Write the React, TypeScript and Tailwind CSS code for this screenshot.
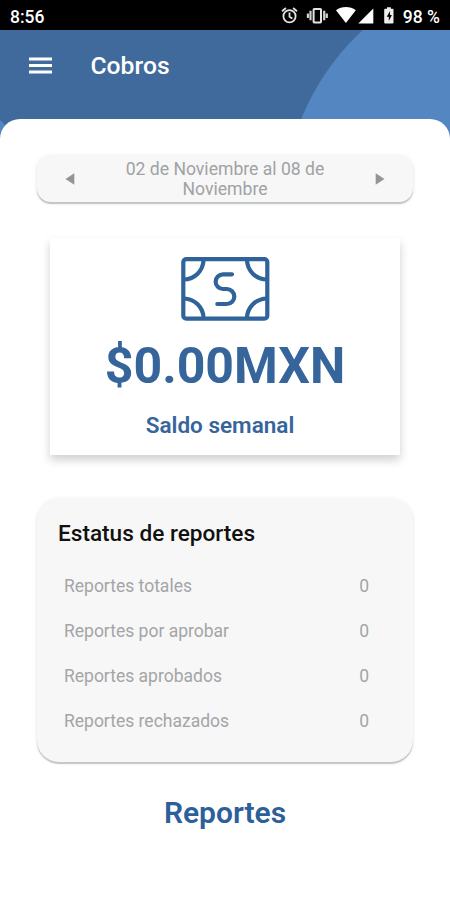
import React from "react";

type Report = {
  label: string;
  total: number;
};

const reports: Report[] = [
  { label: "Reportes totales", total: 0 },
  { label: "Reportes por aprobar", total: 0 },
  { label: "Reportes aprobados", total: 0 },
  { label: "Reportes rechazados", total: 0 },
];

function StatusBar() {
  return (
    <div className="h-[30px] bg-black text-white flex items-center justify-between px-[10px] pt-[3px]">
      <span className="text-[17.5px] leading-[18px] font-medium">8:56</span>
      <div className="flex items-center">
        <svg width="160" height="30" viewBox="280 0 160 30" className="-mt-[3px] -mr-[37px]">
          {/* alarm */}
          <g fill="none" stroke="#e4e4e4" strokeWidth="1.8">
            <circle cx="289.5" cy="16.2" r="6.1" />
            <path d="M289.5 12.5v4.2l2.9 1.8M282 11.2l3.9-3.2M297 11.2l-3.9-3.2" />
          </g>
          {/* vibrate */}
          <rect x="313.600" y="9" width="7.400" height="13.400" rx="0.6" fill="none" stroke="#e4e4e4" strokeWidth="2" />
          <path d="M310.500 10.800v9.400M324.200 10.800v9.400M307.900 13.400v4.600M326.800 13.400v4.600" stroke="#d0d0d0" strokeWidth="2.2" />
          {/* wifi, signal */}
          <path d="M336 10.2c5.6-4.2 14.2-4.2 19.8 0L345.900 23z" fill="#fff" />
          <path d="M373.3 8.4v15H358.3z" fill="#fff" />
          {/* battery */}
          <path d="M385.5 8.7h1.5V7.2h3.8v1.5h1.7q1 0 1 1v12.7q0 1-1 1h-7.300q-1 0-1-1V9.7q0-1 1-1z" fill="#eee" />
          <path d="M390.100 11l-3.400 5.700h2.100v4.200l3.100-5.800h-1.900z" fill="#000" />
        </svg>
        <span className="text-[17.5px] leading-[18px] font-medium whitespace-nowrap">98 %</span>
      </div>
    </div>
  );
}

function Arrow({ left = false }: { left?: boolean }) {
  return (
    <svg width="10" height="12" viewBox="0 0 10 12" fill="#929497" className={left ? "rotate-180" : ""}>
      <path d="M.7.2 9.5 6 .7 11.8z" />
    </svg>
  );
}

function MoneyIcon() {
  return (
    <svg width="90" height="66" viewBox="180 256 90 66" fill="none" stroke="#31639b" strokeWidth="4.2">
      <rect x="183.3" y="259.1" width="84" height="59.6" rx="3" />
      <path d="M203.5 260a20 20 0 0 1-19.5 19.5M247 260a20 20 0 0 0 19.5 19.5M203.5 318a20 20 0 0 0-19.5-19.5M247 318a20 20 0 0 1 19.5-19.5" />
      <path d="M232 274.3H223a7.35 7.35 0 0 0 0 14.7h3.8a7.5 7.5 0 0 1 0 15h-9.5" strokeLinecap="round" />
    </svg>
  );
}

export default function App() {
  return (
    <div className="w-[450px] h-[900px] overflow-hidden bg-white font-['Roboto',sans-serif] flex flex-col">
      <StatusBar />

      <header className="relative h-[109px] shrink-0 bg-[#406a9b]">
        <svg width="450" height="109" viewBox="0 30 450 109" className="absolute inset-0">
          <circle cx="527.6" cy="210" r="244" fill="#5487c1" />
          <circle cx="-38" cy="164" r="58" fill="#5487c1" />
        </svg>
        <div className="relative flex items-center h-[71px] pl-[29px] text-white">
          <svg width="23" height="17" viewBox="0 0 23 17" fill="#fff">
            <path d="M0 .5h23v3H0zM0 7h23v3H0zM0 13.5h23v3H0z" />
          </svg>
          <h1 className="ml-[38.5px] pt-[2px] text-[24.7px] leading-none font-medium">Cobros</h1>
        </div>
      </header>

      <main className="relative -mt-5 flex-1 bg-white rounded-t-[20px] px-[37px] pt-[36px] flex flex-col">
        <div className="h-[47px] shrink-0 rounded-[14px] bg-[#f7f7f7] shadow-[0_2px_1px_#c4c5c5,0_1px_5px_#00000016] flex items-center justify-between px-[28px]">
          <Arrow left />
          <p className="w-[230px] pt-[1px] text-center text-[17.6px] leading-[20px] text-[#a0a2a4]">
            02 de Noviembre al 08 de Noviembre
          </p>
          <Arrow />
        </div>

        <section className="mt-[36px] mx-[13px] h-[217px] shrink-0 bg-white shadow-[0_5px_9px_#00000030] flex flex-col items-center pt-[18px] text-[#36659b]">
          <MoneyIcon />
          <p className="mt-[16px] text-[50px] leading-[56px] font-bold">$0.00MXN</p>
          <p className="mt-[17px] mr-[10px] text-[22.5px] leading-[28px] font-semibold">Saldo semanal</p>
        </section>

        <section className="mt-[43px] h-[264px] shrink-0 rounded-[22px] bg-[#f7f7f7] shadow-[0_2px_1px_#c4c5c5,0_1px_4px_#00000014] pt-[22px] pl-[21px] pr-[44px]">
          <h2 className="text-[22.6px] leading-[28px] font-medium text-[#111]">Estatus de reportes</h2>
          <ul className="mt-[16px] pl-[6px]">
            {reports.map((report) => (
              <li key={report.label} className="flex h-[45px] items-center justify-between text-[17.5px] text-[#a3a5a7]">
                <span>{report.label}</span>
                <span>{report.total}</span>
              </li>
            ))}
          </ul>
        </section>

        <button className="mt-[33px] text-center text-[30px] leading-[36px] font-semibold text-[#2d5f98]">
          Reportes
        </button>
      </main>
    </div>
  );
}
